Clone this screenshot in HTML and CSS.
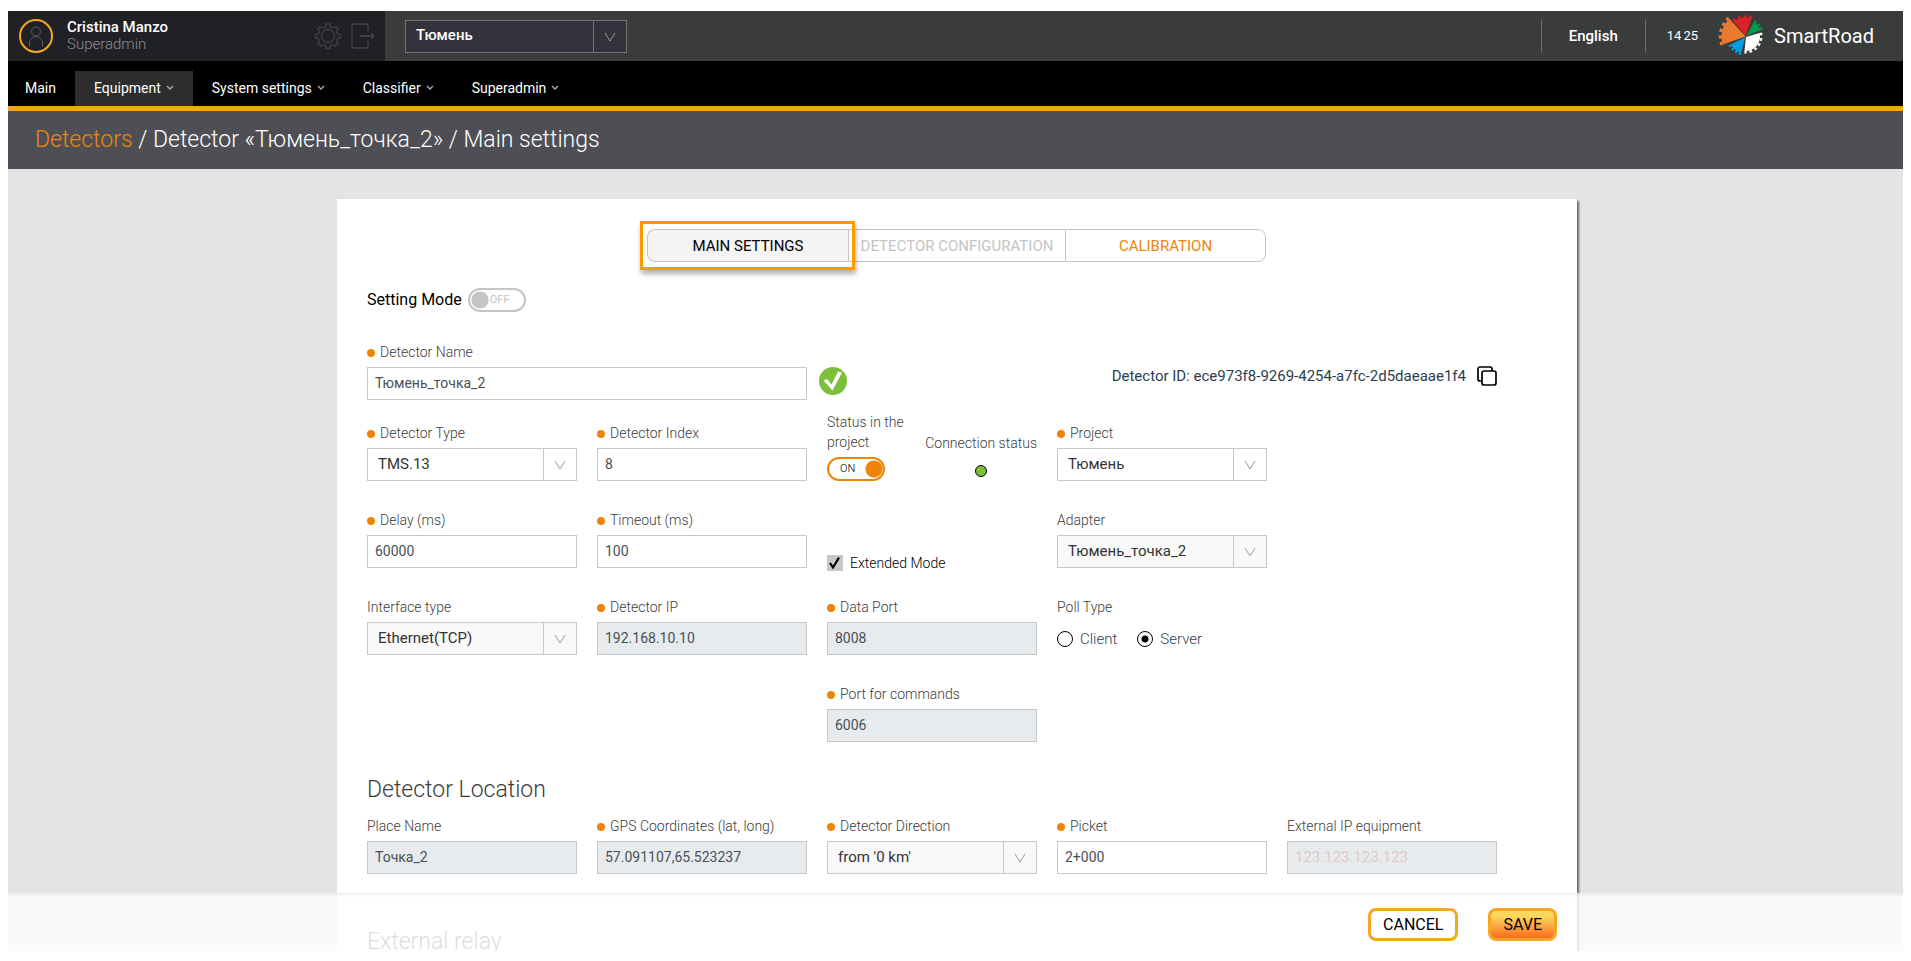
FILE: index.html
```html
<!DOCTYPE html>
<html lang="en">
<head>
    <meta charset="UTF-8">
    <meta name="viewport" content="width=device-width, initial-scale=1.0">
    <title>SmartRoad - Main settings</title>
    <link rel="stylesheet" href="styles.css">
</head>
<body>
    <svg class="sprite" aria-hidden="true">
        <symbol id="arrow" viewBox="0 0 12 10"><path d="M1 1l5 8 5-8" fill="none" stroke="currentColor"/></symbol>
        <symbol id="chevron" viewBox="0 0 8 6"><path d="M1 1l3 3 3-3" fill="none" stroke="currentColor" stroke-width="1.3"/></symbol>
    </svg>
    <div class="app">
        <header class="topbar">
            <div class="user">
                <svg class="avatar" viewBox="0 0 34 34">
                    <circle cx="17" cy="17" r="16" fill="none" stroke="#f5a623" stroke-width="2"/>
                    <g fill="none" stroke="#5c5d60">
                        <circle cx="17" cy="12.5" r="4.5"/>
                        <path d="M10.500 27.500v-3.500a6.500 6.500 0 0 1 13 0v3.500"/>
                    </g>
                </svg>
                <div class="user-text">
                    <div class="user-name">Cristina Manzo</div>
                    <div class="user-role">Superadmin</div>
                </div>
                <button class="icon-btn" type="button" aria-label="Settings">
                    <svg width="26" height="26" viewBox="0 0 26 26" fill="none" stroke="#404143" stroke-width="1.3">
                        <circle cx="13" cy="13" r="6.5"/>
                        <path d="M11 1h4l.6 3 2.400 1 2.500-1.700 2.700 2.700-1.700 2.600 1 2.300 3 .6v3.500l-3 .7-1 2.400 1.700 2.500-2.700 2.700-2.500-1.700-2.400 1-.6 2.900h-4l-.6-2.900-2.400-1-2.500 1.700-2.700-2.700 1.700-2.500-1-2.400-3-.7v-3.500l3-.6 1-2.300-1.700-2.600 2.700-2.700 2.500 1.700 2.400-1z" stroke-linejoin="round"/>
                    </svg>
                </button>
                <button class="icon-btn" type="button" aria-label="Log out">
                    <svg width="26" height="26" viewBox="0 0 26 26" fill="none" stroke="#404143" stroke-width="1.3">
                        <path d="M17 8V3.500a2.500 2.500 0 0 0-2.500-2.500h-11A2.500 2.500 0 0 0 1 3.500v19A2.500 2.500 0 0 0 3.500 25h11a2.500 2.500 0 0 0 2.500-2.500V18"/>
                        <path d="M9 13h12" stroke-width="2"/>
                        <path d="M20 9.500l4.500 3.500-4.500 3.500z" fill="#404143" stroke="none"/>
                    </svg>
                </button>
            </div>
            <div class="select select-dark">
                <select aria-label="Project">
                    <option>Тюмень</option>
                </select>
                <svg class="select-arrow"><use href="#arrow"/></svg>
            </div>
            <button class="lang" type="button">English</button>
            <div class="clock"><span>14</span><span>25</span></div>
            <a class="brand" href="#">
                <svg width="47" height="42" viewBox="0 0 47 42">
                    <path fill="#e87b2e" d="M28.500 21.500L5.900 29.600A24 24 0 0 1 12.400 3.700z"/>
                    <path fill="none" stroke="#e87b2e" stroke-width="3" stroke-dasharray="3.300" d="M4.800 30A25.200 25.200 0 0 1 11.600 2.800"/>
                    <path fill="#dc2127" d="M28.500 21L16.700 6.600A19 19 0 0 1 34.600 3.500z"/>
                    <path fill="none" stroke="#dc2127" stroke-width="2.500" stroke-dasharray="2.840" d="M16.100 5.800A20 20 0 0 1 34.900 2.500"/>
                    <path fill="#009b48" d="M29.500 20.500L36.800 7.200A16.500 16.500 0 0 1 43.700 15.100z"/>
                    <path fill="none" stroke="#009b48" stroke-width="2.500" stroke-dasharray="2.280" d="M37.300 6.300A17.600 17.600 0 0 1 44.700 14.600"/>
                    <path fill="#fff" d="M29 22L42.600 18A14.500 14.500 0 0 1 27.500 36z"/>
                    <path fill="none" stroke="#fff" stroke-width="2.500" stroke-dasharray="2.710" d="M43.800 17.700A15.800 15.800 0 0 1 27.400 37.300"/>
                    <path fill="#009fe3" d="M28 22.500L24.200 37.700A16.800 16.800 0 0 1 13.700 29.400z"/>
                    <path fill="none" stroke="#009fe3" stroke-width="2.500" stroke-dasharray="2.100" d="M23.900 38.900A18 18 0 0 1 12.600 30"/>
                </svg>
                SmartRoad
            </a>
        </header>

        <nav class="menu">
            <a href="#">Main</a>
            <a class="active" href="#">Equipment <svg class="chevron"><use href="#chevron"/></svg></a>
            <a href="#">System settings <svg class="chevron"><use href="#chevron"/></svg></a>
            <a href="#">Classifier <svg class="chevron"><use href="#chevron"/></svg></a>
            <a href="#">Superadmin <svg class="chevron"><use href="#chevron"/></svg></a>
        </nav>

        <h1 class="crumbs"><a href="#">Detectors</a> / Detector «Тюмень_точка_2» / Main settings</h1>

        <main class="content">
            <form class="card" id="detector">
                <div class="tabs">
                    <button class="tab current" type="button">MAIN SETTINGS</button>
                    <button class="tab" type="button" disabled>DETECTOR CONFIGURATION</button>
                    <button class="tab" type="button">CALIBRATION</button>
                </div>

                <label class="mode">
                    Setting Mode
                    <span class="toggle">
                        <input type="checkbox">
                        <span>OFF</span>
                    </span>
                </label>

                <div class="name-row">
                    <div class="field">
                        <label class="required" for="name">Detector Name</label>
                        <input class="text" id="name" type="text" value="Тюмень_точка_2">
                    </div>
                    <svg class="valid" width="28" height="28" viewBox="0 0 28 28">
                        <circle cx="14" cy="14" r="14" fill="#7bbf3a"/>
                        <path d="M4.500 13.500l3.500-1.500 4.500 5.500L19 4.500l4 1-9.500 18z" fill="#fff"/>
                    </svg>
                    <div class="detector-id">
                        <span>Detector ID: ece973f8-9269-4254-a7fc-2d5daeaae1f4</span>
                        <button class="icon-btn" type="button" aria-label="Copy">
                            <svg width="20" height="20" viewBox="0 0 20 20" fill="none" stroke="#000" stroke-width="1.700">
                                <path d="M5 15H3a2 2 0 0 1-2-2V3a2 2 0 0 1 2-2h10a2 2 0 0 1 2 2v2"/>
                                <rect x="5" y="5" width="14" height="14" rx="2"/>
                            </svg>
                        </button>
                    </div>
                </div>

                <div class="grid">
                    <div class="field">
                        <label class="required" for="type">Detector Type</label>
                        <div class="select">
                            <select id="type"><option>TMS.13</option></select>
                            <svg class="select-arrow"><use href="#arrow"/></svg>
                        </div>
                    </div>
                    <div class="field">
                        <label class="required" for="index">Detector Index</label>
                        <input class="text" id="index" type="text" value="8">
                    </div>
                    <div class="status">
                        <div class="field status-project">
                            <label for="status">Status in the project</label>
                            <span class="toggle">
                                <input id="status" type="checkbox" checked>
                                <span>ON</span>
                            </span>
                        </div>
                        <div class="field status-link">
                            Connection status
                            <span class="lamp"></span>
                        </div>
                    </div>
                    <div class="field">
                        <label class="required" for="project">Project</label>
                        <div class="select">
                            <select id="project"><option>Тюмень</option></select>
                            <svg class="select-arrow"><use href="#arrow"/></svg>
                        </div>
                    </div>

                    <div class="field first">
                        <label class="required" for="delay">Delay (ms)</label>
                        <input class="text" id="delay" type="text" value="60000">
                    </div>
                    <div class="field">
                        <label class="required" for="timeout">Timeout (ms)</label>
                        <input class="text" id="timeout" type="text" value="100">
                    </div>
                    <label class="check">
                        <input type="checkbox" checked>
                        <svg viewBox="0 0 16 16"><path d="M3 8l3 4.500L12 2.500" fill="none" stroke="#000" stroke-width="2.200"/></svg>
                        Extended Mode
                    </label>
                    <div class="field">
                        <label for="adapter">Adapter</label>
                        <div class="select">
                            <select id="adapter" disabled><option>Тюмень_точка_2</option></select>
                            <svg class="select-arrow"><use href="#arrow"/></svg>
                        </div>
                    </div>

                    <div class="field first">
                        <label for="interface">Interface type</label>
                        <div class="select">
                            <select id="interface" disabled><option>Ethernet(TCP)</option></select>
                            <svg class="select-arrow"><use href="#arrow"/></svg>
                        </div>
                    </div>
                    <div class="field">
                        <label class="required" for="ip">Detector IP</label>
                        <input class="text" id="ip" type="text" value="192.168.10.10" disabled>
                    </div>
                    <div class="field">
                        <label class="required" for="port">Data Port</label>
                        <input class="text" id="port" type="text" value="8008" disabled>
                    </div>
                    <div class="field" role="radiogroup" aria-labelledby="poll">
                        <div id="poll">Poll Type</div>
                        <div class="radios">
                            <label><input type="radio" name="poll">Client</label>
                            <label><input type="radio" name="poll" checked>Server</label>
                        </div>
                    </div>

                    <div class="field third">
                        <label class="required" for="cmd">Port for commands</label>
                        <input class="text" id="cmd" type="text" value="6006" disabled>
                    </div>
                </div>

                <h2>Detector Location</h2>
                <div class="grid">
                    <div class="field">
                        <label for="place">Place Name</label>
                        <input class="text" id="place" type="text" value="Точка_2" disabled>
                    </div>
                    <div class="field">
                        <label class="required" for="gps">GPS Coordinates (lat, long)</label>
                        <input class="text" id="gps" type="text" value="57.091107,65.523237" disabled>
                    </div>
                    <div class="field">
                        <label class="required" for="direction">Detector Direction</label>
                        <div class="select">
                            <select id="direction" disabled><option>from '0 km'</option></select>
                            <svg class="select-arrow"><use href="#arrow"/></svg>
                        </div>
                    </div>
                    <div class="field">
                        <label class="required" for="picket">Picket</label>
                        <input class="text" id="picket" type="text" value="2+000">
                    </div>
                    <div class="field">
                        <label for="extip">External IP equipment</label>
                        <input class="text" id="extip" type="text" placeholder="123.123.123.123" disabled>
                    </div>
                </div>

                <h2>External relay</h2>
            </form>
        </main>

        <footer class="actions">
            <div class="actions-inner">
                <button class="btn" type="button">CANCEL</button>
                <button class="btn btn-save" type="submit" form="detector">SAVE</button>
            </div>
        </footer>
    </div>
</body>
</html>
```
FILE: styles.css
```css
* {
    box-sizing: border-box;
}

body {
    margin: 11px 8px 10px;
    background: #fff;
    font-family: Roboto, "Liberation Sans", sans-serif;
    font-size: 14px;
    line-height: 20px;
    color: #3c3c3c;
}

button, input, select {
    font-family: inherit;
    margin: 0;
}

button {
    cursor: pointer;
}

a {
    color: inherit;
    text-decoration: none;
}

.sprite {
    display: none;
}

.app {
    position: relative;
    display: flex;
    flex-direction: column;
    height: calc(100vh - 21px);
    overflow: hidden;
    background: #e4e4e4;
}

/* top bar */
.topbar {
    display: flex;
    align-items: center;
    flex: none;
    height: 50px;
    padding-right: 29px;
    background: #3a3c3b;
    color: #fff;
}

.user {
    display: flex;
    align-items: center;
    gap: 10px;
    width: 377px;
    height: 50px;
    padding: 0 8px 0 11px;
    margin-right: 20px;
    background: #202125;
}

.avatar {
    width: 34px;
    height: 34px;
}

.user-text {
    flex: 1;
    padding-left: 4px;
    font-size: 15px;
    line-height: 17px;
}

.user-name {
    font-weight: 500;
}

.user-role {
    font-weight: 300;
    color: #8c8d90;
}

.icon-btn {
    display: flex;
    padding: 0;
    border: 0;
    background: none;
}

.lang {
    height: 34px;
    margin-left: auto;
    padding: 0 27px;
    border: 1px solid #6b6d6c;
    border-width: 0 1px;
    background: none;
    color: #fff;
    font-size: 15px;
    font-weight: 500;
}

.clock {
    display: flex;
    gap: 2px;
    padding: 0 19px 0 21px;
    font-size: 13px;
}

.brand {
    display: flex;
    align-items: center;
    gap: 10px;
    font-size: 20px;
}

/* menu */
.menu {
    display: flex;
    flex: none;
    height: 50px;
    padding-top: 10px;
    border-bottom: 5px solid #f5a623;
    background: #000;
    color: #fff;
}

.menu a {
    display: flex;
    align-items: center;
    gap: 5px;
    padding: 0 19px 2px;
}

.menu a:first-child {
    padding-left: 17px;
}

.menu .active {
    background: #2d2d2d;
}

.chevron {
    width: 8px;
    height: 6px;
    color: #b0b0b0;
}

.crumbs {
    flex: none;
    margin: 0;
    padding: 0 27px;
    background: #4e4f54;
    color: #fff;
    font-size: 23px;
    font-weight: 300;
    line-height: 58px;
}

.crumbs a {
    color: #ef8508;
}

/* form card */
.content {
    flex: 1;
    min-height: 0;
    padding: 30px 0 0 3px;
    overflow: hidden;
}

.card {
    max-width: 1240px;
    margin: 0 auto;
    padding: 30px 80px 30px 30px;
    background: #fff;
    box-shadow: 2px 2px 2px #666;
}

.tabs {
    display: flex;
    width: 619px;
    margin: 0 -50px 26px 280px;
}

.tab {
    position: relative;
    flex: 1 0 201px;
    height: 33px;
    padding: 0;
    border: 1px solid #c4c4c4;
    border-right-width: 0;
    background: #fff;
    color: #ef8508;
    font-size: 15px;
    white-space: nowrap;
}

.tab:nth-child(2) {
    flex-basis: 217px;
}

.tab:first-child {
    border-radius: 8px 0 0 8px;
}

.tab:last-child {
    border-right-width: 1px;
    border-radius: 0 8px 8px 0;
}

.tab:disabled {
    color: #c4c4c4;
}

.tab.current {
    background: #f4f4f4;
    color: #000;
}

/* frame around the open tab */
.tab.current::after {
    content: "";
    position: absolute;
    z-index: 1;
    inset: -9px -7px -9px -8px;
    border: 3px solid #ff9900;
    box-shadow: 1px 4px 5px rgba(0, 0, 0, .3);
    clip-path: polygon(-10px -10px, calc(100% + 10px) -10px, calc(100% + 10px) calc(100% + 12px), -10px calc(100% + 12px), -10px -10px, 3px 3px, 3px calc(100% - 3px), calc(100% - 3px) calc(100% - 3px), calc(100% - 3px) 3px, 3px 3px);
}

.mode {
    display: inline-flex;
    align-items: center;
    gap: 6px;
    height: 24px;
    margin-bottom: 30px;
    color: #000;
    font-size: 16px;
}

.toggle {
    position: relative;
    display: flex;
    width: 58px;
    height: 24px;
}

.toggle input {
    appearance: none;
    width: 58px;
    height: 24px;
    border: 2px solid #c4c4c4;
    border-radius: 12px;
    background: radial-gradient(circle at 10px 10px, #c4c4c4 8px, transparent 9px);
}

.toggle input:checked {
    border-color: #ef8508;
    background: radial-gradient(circle at 45px 10px, #ef8508 8px, transparent 9px);
}

.toggle span {
    position: absolute;
    top: 2px;
    left: 22px;
    color: #c4c4c4;
    font-size: 11px;
    pointer-events: none;
}

.toggle input:checked + span {
    left: 13px;
    color: #000;
}

.name-row {
    display: flex;
    margin-bottom: 12px;
}

.name-row .field {
    width: 440px;
    padding: 0;
}

.valid {
    margin: 25px 0 0 12px;
}

.detector-id {
    display: flex;
    align-items: center;
    gap: 11px;
    height: 20px;
    margin: 24px 0 0 auto;
    color: #2c3e50;
    font-size: 15px;
}

.grid {
    display: grid;
    grid-template-columns: repeat(5, 1fr);
    gap: 26px 20px;
    align-items: end;
}

.field {
    display: flex;
    flex-direction: column;
    gap: 5px;
    padding-bottom: 3px;
    font-weight: 300;
}

.first {
    grid-column: 1;
}

.third {
    grid-column: 3;
}

.required::before {
    content: "";
    display: inline-block;
    width: 8px;
    height: 8px;
    margin-right: 5px;
    border-radius: 50%;
    background: #ef8508;
}

.text {
    width: 100%;
    height: 33px;
    padding: 0 7px 2px;
    border: 1px solid #c8c8c8;
    background: #fff;
    color: #495057;
    font-size: 14px;
}

.text:disabled {
    background: #e8ebee;
}

.text::placeholder {
    color: #e3c9cb;
    font-size: 15px;
}

.select {
    position: relative;
    display: grid;
}

.select select {
    appearance: none;
    width: 100%;
    height: 33px;
    padding: 0 40px 2px 10px;
    border: 1px solid #c8c8c8;
    border-radius: 0;
    background: linear-gradient(#c8c8c8, #c8c8c8) right 32px top / 1px 100% no-repeat #fff;
    color: #333;
    font-size: 15px;
    opacity: 1;
}

.select select:disabled {
    background-color: #f9f9f9;
}

.select-arrow {
    position: absolute;
    top: 12px;
    right: 11px;
    width: 12px;
    height: 10px;
    color: #999;
    pointer-events: none;
}

.select-dark {
    width: 222px;
}

.select-dark select {
    border-color: #727377;
    background: linear-gradient(#727377, #727377) right 32px top / 1px 100% no-repeat #33333b;
    color: #fff;
    font-weight: 500;
}

.status {
    display: flex;
    align-items: flex-end;
    justify-content: space-between;
}

.status-project {
    width: 80px;
}

.status-link {
    align-items: center;
    gap: 12px;
    padding-bottom: 7px;
}

.lamp {
    width: 12px;
    height: 12px;
    border: 1px solid #000;
    border-radius: 50%;
    background: #7bbf3a;
}

.check {
    display: grid;
    grid-template-columns: 16px 1fr;
    align-items: center;
    column-gap: 7px;
    color: #000;
    font-weight: 300;
    line-height: 16px;
}

.check input, .check svg {
    grid-area: 1 / 1;
    width: 16px;
    height: 16px;
}

.check input {
    appearance: none;
    background: #c8c8c8;
}

.check svg {
    z-index: 1;
    pointer-events: none;
}

.radios {
    display: flex;
    gap: 20px;
    height: 33px;
    color: #2c3e50;
    font-size: 15px;
}

.radios label {
    display: flex;
    align-items: center;
    gap: 7px;
}

.radios input {
    appearance: none;
    width: 16px;
    height: 16px;
    border: 1px solid #000;
    border-radius: 50%;
}

.radios input:checked {
    background: radial-gradient(circle, #000 3px, transparent 4px);
}

h2 {
    margin: 29px 0 10px;
    font-size: 23px;
    font-weight: 300;
    line-height: 32px;
}

.grid + h2:last-child {
    margin-top: 49px;
}

/* bottom bar lies over the form */
.actions {
    position: absolute;
    right: 0;
    bottom: 0;
    left: 0;
    z-index: 2;
    padding: 15px 0 10px 3px;
    background: linear-gradient(rgba(0, 0, 0, .06), transparent 5px) rgba(255, 255, 255, .82);
}

.actions-inner {
    display: flex;
    justify-content: flex-end;
    gap: 30px;
    max-width: 1240px;
    margin: 0 auto;
    padding-right: 20px;
}

.btn {
    height: 33px;
    padding: 0 12px;
    border: 3px solid #f5a623;
    border-radius: 8px;
    background: #fff;
    color: #000;
    font-size: 16px;
}

.btn-save {
    background: linear-gradient(#fbd85d 20%, #fa6b1c);
}
```
